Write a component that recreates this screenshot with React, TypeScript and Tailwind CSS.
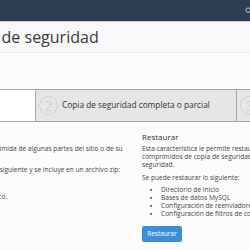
import { Search } from "lucide-react";

const font = { fontFamily: '"Open Sans", "Liberation Sans", sans-serif' };

function Tab({ n, label, active }: { n: number; label: string; active?: boolean }) {
  return (
    <div
      className={
        "flex items-center gap-[4px] shrink-0 w-[201px] h-full border-l border-[#a8a8a8] pl-[3px] " +
        (active ? "bg-white" : "bg-[#e6e6e6]")
      }
    >
      <div className="w-[19px] h-[19px] shrink-0 rounded-full border-[1.5px] border-[#d2d2d2] flex items-center justify-center text-[15px] leading-none text-[#d2d2d2]">
        {n}
      </div>
      <span className="text-[8.3px] text-[#333] whitespace-nowrap">{label}</span>
    </div>
  );
}

export default function App() {
  return (
    <div className="w-[250px] h-[250px] overflow-hidden bg-[#fcfcfc]" style={font}>
      {/* top bar */}
      <div className="h-[21px] bg-[#2d3e50] flex items-center justify-end">
        <Search className="w-[7px] h-[7px] text-[#c9d0d6] -mr-[2px]" strokeWidth={3} />
      </div>
      {/* page title */}
      <div className="h-[32px] border-t border-[#c9c9c9] border-b border-b-[#ececec] bg-[#f8f8f8] flex items-center">
        <h1 className="-ml-[45px] whitespace-nowrap text-[16px] text-[#3a3a3a]">Copia de seguridad</h1>
      </div>

      {/* steps */}
      <div className="mt-[36px] h-[33px] border-y border-[#a8a8a8] flex -ml-[166px]">
        <Tab n={1} label="Copia de seguridad" active />
        <Tab n={2} label="Copia de seguridad completa o parcial" />
        <Tab n={3} label="Restaurar" />
      </div>

      {/* columns */}
      <div className="flex mt-[10px]">
        <div className="w-[270px] shrink-0 -ml-[128px] text-[6.6px] text-[#444] leading-[8px]">
          <p className="mt-[13px] whitespace-nowrap">Descargue una copia de seguridad comprimida de algunas partes del sitio o de su</p>
          <p className="mt-[13px] ml-[6px] whitespace-nowrap">La copia de seguridad parcial incluye lo siguiente y se incluye en un archivo zip:</p>
          <p className="mt-[19px] ml-[4px] whitespace-nowrap">Guarde el archivo comprimido en su disco.</p>
        </div>
        <div className="shrink-0 text-[#444]">
          <h2 className="text-[8px] leading-[10px] text-[#333]">Restaurar</h2>
          <div className="mt-[3px] text-[6.6px] leading-[8px] whitespace-nowrap">
            <p>Esta característica le permite restaurar archivos</p>
            <p>comprimidos de copia de seguridad parcial de su copia de</p>
            <p>seguridad.</p>
          </div>
          <p className="mt-[5px] text-[6.6px] leading-[8px] whitespace-nowrap">Se puede restaurar lo siguiente:</p>
          <ul className="mt-[4px] list-disc pl-[19px] text-[6.6px] leading-[8px] whitespace-nowrap">
            <li>Directorio de inicio</li>
            <li>Bases de datos MySQL</li>
            <li>Configuración de reenviadores de correo</li>
            <li>Configuración de filtros de correo</li>
          </ul>
          <button className="mt-[5px] w-[40px] h-[16px] rounded-[2px] bg-[#3b8fd8] text-white text-[6.5px] leading-none">
            Restaurar
          </button>
        </div>
      </div>
    </div>
  );
}
